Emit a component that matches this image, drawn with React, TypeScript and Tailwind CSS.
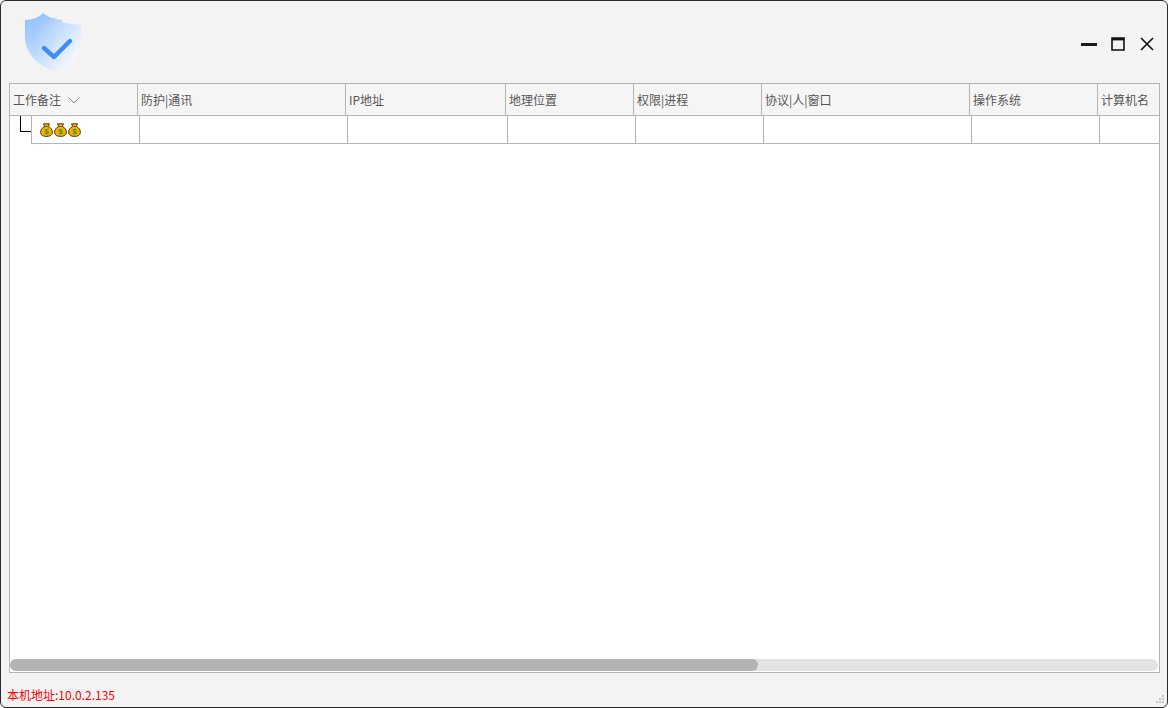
const cols = [
  { label: "工作备注", w: "w-[128px]", rw: "w-[108px]" },
  { label: "防护|通讯", w: "w-[208px]", rw: "w-[208px]" },
  { label: "IP地址", w: "w-[160px]", rw: "w-[160px]" },
  { label: "地理位置", w: "w-[128px]", rw: "w-[128px]" },
  { label: "权限|进程", w: "w-[128px]", rw: "w-[128px]" },
  { label: "协议|人|窗口", w: "w-[208px]", rw: "w-[208px]" },
  { label: "操作系统", w: "w-[128px]", rw: "w-[128px]" },
  { label: "计算机名", w: "w-[128px]", rw: "w-[128px]" },
];

function Bag() {
  return (
    <svg width="13" height="14" viewBox="0 0 13 14" className="shrink-0">
      <path d="M3.5 0.8 L9.5 0.8 L8.3 3.4 C11 4.6 12.6 7 12.4 9.6 C12.2 12.2 10 13.4 6.5 13.4 C3 13.4 0.8 12.2 0.6 9.6 C0.4 7 2 4.6 4.7 3.4 Z" fill="#f5b000" stroke="#4a3a10" strokeWidth="1" />
      <path d="M4.5 3.5 H8.5" stroke="#7a5a10" strokeWidth="1" />
      <text x="6.5" y="11" textAnchor="middle" fontSize="8" fontWeight="700" fill="#3f8f1f" fontFamily="Liberation Sans, sans-serif">$</text>
    </svg>
  );
}

function Logo() {
  return (
    <svg width="60" height="62" viewBox="0 0 60 62">
      <defs>
        <linearGradient id="back" x1="0.2" y1="0" x2="0.6" y2="1">
          <stop offset="0" stopColor="#8fc0fb" />
          <stop offset="1" stopColor="#d6e8fd" />
        </linearGradient>
        <linearGradient id="front" x1="0" y1="0.1" x2="0.85" y2="0.85">
          <stop offset="0" stopColor="#96c3fb" />
          <stop offset="0.55" stopColor="#cfe3fd" />
          <stop offset="1" stopColor="#f6faff" />
        </linearGradient>
      </defs>
      <path d="M1 8 C9 8 15 5 19 1 C24 5 31 8 38 8 L38 34 C34 46 24 52 19 54 C9 48 1 38 1 24 Z" fill="url(#back)" />
      <path d="M8 12.5 C17 12.5 24 10 30 5.5 C36 10 44 12.5 57 12.5 L57 33 C55 46 42 58 32 60 C20 57 8 46 8 28 Z" fill="url(#front)" />
      <path d="M20 36 L30 45 L46 29" fill="none" stroke="#3f8cf8" strokeWidth="4.4" strokeLinecap="round" strokeLinejoin="round" />
    </svg>
  );
}

export default function App() {
  return (
    <div className="w-[1168px] h-[708px] bg-[#f3f3f3] border border-[#2a2a2a] rounded-[6px] flex flex-col overflow-hidden text-[12px] font-['Noto_Sans_CJK_SC',sans-serif]">
      <div className="h-[82px] shrink-0 flex pl-[23px] pr-[12px]">
        <div className="pt-[11px]">
          <Logo />
        </div>
        <div className="ml-auto flex items-center gap-[14px] pt-[4px]">
          <svg width="16" height="16" viewBox="0 0 16 16"><rect x="0" y="7" width="16" height="3" fill="#1a1a1a" /></svg>
          <svg width="14" height="14" viewBox="0 0 14 14"><path d="M1 1 H13 V13 H1 Z" fill="none" stroke="#111" strokeWidth="1.6" /><rect x="1" y="1" width="12" height="2.4" fill="#111" /></svg>
          <svg width="16" height="16" viewBox="0 0 16 16"><path d="M2 2 L14 14 M14 2 L2 14" stroke="#111" strokeWidth="1.6" /></svg>
        </div>
      </div>

      <div className="ml-[8px] w-[1151px] h-[590px] shrink-0 border border-[#b4b4b4] bg-white flex flex-col overflow-hidden">
        <div className="h-[32px] shrink-0 flex bg-[#f5f5f5] border-b border-[#b4b4b4] text-[#555]">
          {cols.map((c, i) => (
            <div key={c.label} className={`${c.w} shrink-0 h-full border-r border-[#b4b4b4] pl-[3px] flex items-center gap-[7px] whitespace-nowrap`}>
              <span>{c.label}</span>
              {i === 0 && (
                <svg width="12" height="7" viewBox="0 0 12 7" className="mt-[2px]"><path d="M0.5 0.5 L6 6 L11.5 0.5" fill="none" stroke="#8a8a8a" strokeWidth="1" /></svg>
              )}
            </div>
          ))}
        </div>

        <div className="flex shrink-0">
          <div className="w-[21px] shrink-0 pl-[10px]">
            <div className="w-[11px] h-[16px] border-l border-b border-black" />
          </div>
          <div className="flex h-[28px] border-l border-b border-[#b4b4b4]">
            {cols.map((c, i) => (
              <div key={c.label} className={`${c.rw} shrink-0 h-full border-r border-[#b4b4b4] flex items-center`}>
                {i === 0 && (
                  <div className="flex gap-[1px] pl-[8px] pt-[1px]">
                    <Bag />
                    <Bag />
                    <Bag />
                  </div>
                )}
              </div>
            ))}
          </div>
        </div>

        <div className="flex-1" />

        <div className="h-[12px] shrink-0 mb-[1px] bg-[#e3e3e3] rounded-[6px] mr-[1px]">
          <div className="w-[748px] h-full bg-[#b3b3b3] rounded-[6px]" />
        </div>
      </div>

      <div className="flex-1 relative pl-[6px] pt-[13px] leading-[18px] text-[#ff0000]">
        本机地址:10.0.2.135
        <svg width="10" height="10" viewBox="0 0 10 10" className="absolute right-[2px] bottom-[2px]">
          <g fill="#c4c4c4">
            <rect x="7" y="0" width="2" height="2" />
            <rect x="4" y="3" width="2" height="2" />
            <rect x="7" y="3" width="2" height="2" />
            <rect x="1" y="6" width="2" height="2" />
            <rect x="4" y="6" width="2" height="2" />
            <rect x="7" y="6" width="2" height="2" />
          </g>
        </svg>
      </div>
    </div>
  );
}
